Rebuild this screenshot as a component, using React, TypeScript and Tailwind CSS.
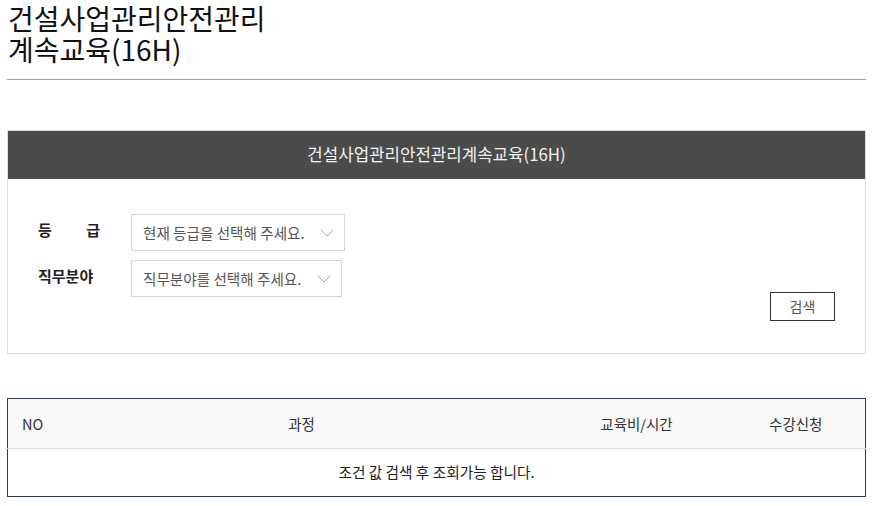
import { ChevronDown } from "lucide-react";

const font = { fontFamily: '"Noto Sans CJK KR", "Noto Sans", sans-serif' };

function SelectBox({ placeholder, width }: { placeholder: string; width: string }) {
  return (
    <div
      className={`flex h-[37px] items-center justify-between border border-[#d4d4d4] bg-white pl-[11px] pr-[5px] text-[14.6px] text-[#555] ${width}`}
    >
      <span>{placeholder}</span>
      <ChevronDown className="size-[24px] text-[#aaa]" strokeWidth={1} />
    </div>
  );
}

export default function App() {
  return (
    <div className="min-h-[506px] bg-white px-[7px] text-[#222]" style={font}>
      {/* ── 제목 ─────────────────────── */}
      <div className="border-b border-[#a0a0a0] pb-[14px] pt-[3px]">
        <h1 className="pl-[1px] text-[28px] font-normal leading-[31px] text-[#111]">
          건설사업관리안전관리
          <br />
          계속교육(16H)
        </h1>
      </div>

      {/* ── 검색 패널 ─────────────────────── */}
      <div className="mt-[50px] border border-[#dddddd]">
        <div className="flex h-[48px] items-center justify-center bg-[#4b4b4b] text-[16.8px] text-[#f2f2f2]">
          건설사업관리안전관리계속교육(16H)
        </div>
        <div className="flex items-end justify-between pb-[32px] pl-[30px] pr-[30px] pt-[35px]">
          <div className="flex flex-col gap-[9px] pb-[24px]">
            <div className="flex items-center">
              <span className="mb-[5px] flex w-[62px] justify-between text-[15px] font-bold text-[#222]">
                <span>등</span>
                <span>급</span>
              </span>
              <span className="ml-[31px]">
                <SelectBox placeholder="현재 등급을 선택해 주세요." width="w-[214px]" />
              </span>
            </div>
            <div className="flex items-center">
              <span className="mb-[5px] w-[62px] text-[15px] font-bold text-[#222]">직무분야</span>
              <span className="ml-[31px]">
                <SelectBox placeholder="직무분야를 선택해 주세요." width="w-[211px]" />
              </span>
            </div>
          </div>
          <button className="h-[29px] w-[65px] border border-[#333] bg-white text-[14px] text-[#555]">
            검색
          </button>
        </div>
      </div>

      {/* ── 결과 테이블 ─────────────────────── */}
      <table className="mt-[44px] w-full border-collapse border border-[#2d3a57] text-[14.5px]">
        <thead>
          <tr className="h-[50px] border-b border-[#dcdcdc] bg-[#f8f8f8] text-[#333]">
            <th className="w-[49px] pl-[14px] text-left font-normal">NO</th>
            <th className="w-[490px] font-normal">과정</th>
            <th className="w-[180px] font-normal">교육비/시간</th>
            <th className="font-normal">수강신청</th>
          </tr>
        </thead>
        <tbody>
          <tr className="h-[48px]">
            <td colSpan={4} className="text-center text-[14.7px] text-[#222]">
              조건 값 검색 후 조회가능 합니다.
            </td>
          </tr>
        </tbody>
      </table>
    </div>
  );
}
